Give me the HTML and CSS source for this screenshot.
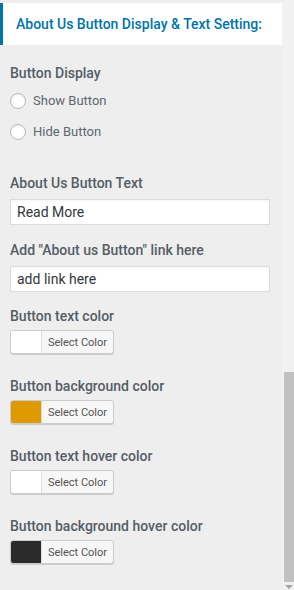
FILE: index.html
```html
<!DOCTYPE html>
<html lang="en">
<head>
    <meta charset="UTF-8">
    <meta name="viewport" content="width=device-width, initial-scale=1.0">
    <title>About Us Button Settings</title>
    <link rel="stylesheet" href="styles.css">
</head>
<body>
    <div class="page">
        <div class="panel">
            <h3 class="section-title">About Us Button Display &amp; Text Setting:</h3>

            <div class="controls">
                <div class="control control-radio">
                    <span class="control-label">Button Display</span>
                    <label class="radio-row"><input type="radio" name="about-btn"> Show Button</label>
                    <label class="radio-row"><input type="radio" name="about-btn"> Hide Button</label>
                </div>

                <div class="control control-text first-text">
                    <span class="control-label">About Us Button Text</span>
                    <input class="text-input" type="text" value="Read More">
                </div>

                <div class="control control-text">
                    <span class="control-label">Add "About us Button" link here</span>
                    <input class="text-input" type="text" value="add link here">
                </div>

                <div class="control control-color">
                    <span class="control-label">Button text color</span>
                    <button class="color-btn"><span class="swatch swatch-white"></span><span class="color-text">Select Color</span></button>
                </div>

                <div class="control control-color">
                    <span class="control-label">Button background color</span>
                    <button class="color-btn"><span class="swatch swatch-gold"></span><span class="color-text">Select Color</span></button>
                </div>

                <div class="control control-color">
                    <span class="control-label">Button text hover color</span>
                    <button class="color-btn"><span class="swatch swatch-white"></span><span class="color-text">Select Color</span></button>
                </div>

                <div class="control control-color">
                    <span class="control-label">Button background hover color</span>
                    <button class="color-btn"><span class="swatch swatch-dark"></span><span class="color-text">Select Color</span></button>
                </div>
            </div>
        </div>

        <div class="scrollbar">
            <div class="scroll-gap"></div>
            <div class="scroll-thumb"></div>
            <div class="scroll-arrow"></div>
        </div>
    </div>
</body>
</html>
```

FILE: styles.css
```css
html, body {
    margin: 0;
    padding: 0;
    background: #eeeeee;
}
body {
    font-family: Roboto, "Noto Sans", sans-serif;
    color: #555d66;
}
.page {
    display: flex;
    height: 590px;
    overflow: hidden;
}
.panel {
    width: 282px;
    flex: none;
}
.section-title {
    margin: 3px 0 0;
    height: 42px;
    box-sizing: border-box;
    background: #fff;
    border-left: 3px solid #0073aa;
    padding-left: 13px;
    display: flex;
    align-items: center;
    font-size: 14px;
    font-weight: 500;
    color: #0073aa;
}
.controls {
    padding: 18px 12px 0 10px;
}
.control {
    display: flex;
    flex-direction: column;
    align-items: flex-start;
}
.control-label {
    font-size: 14px;
    font-weight: 500;
    line-height: 20px;
    color: #555d66;
    margin-bottom: 6px;
}
.control-radio .control-label {
    margin-bottom: 2px;
}
.radio-row {
    display: flex;
    align-items: center;
    height: 31px;
    font-size: 13px;
    color: #60676e;
}
.radio-row input {
    -webkit-appearance: none;
    appearance: none;
    width: 16px;
    height: 16px;
    margin: 0 7px 0 0;
    border: 1px solid #b4b9be;
    border-radius: 50%;
    background: #fff;
    box-shadow: inset 0 1px 2px rgba(0, 0, 0, 0.07);
}
.first-text {
    margin-top: 26px;
}
.control-text {
    margin-bottom: 15px;
}
.text-input {
    width: 260px;
    height: 26px;
    box-sizing: border-box;
    border: 1px solid #dddddd;
    background: #fff;
    padding: 0 6px;
    font-family: inherit;
    font-size: 14px;
    color: #32373c;
    box-shadow: inset 0 1px 2px rgba(0, 0, 0, 0.04);
}
.control-text + .control-color {
    margin-top: -1px;
}
.control-color {
    margin-bottom: 22px;
}
.control-color .control-label {
    margin-bottom: 4px;
}
.color-btn {
    display: flex;
    width: 104px;
    height: 24px;
    padding: 0;
    border: 1px solid #cccccc;
    border-radius: 3px;
    background: #f7f7f7;
    box-shadow: 0 1px 0 #cccccc;
    overflow: hidden;
    font-family: inherit;
    cursor: pointer;
}
.swatch {
    width: 30px;
    height: 100%;
    border-right: 1px solid #dddddd;
}
.swatch-white { background: #ffffff; }
.swatch-gold { background: #dd9900; }
.swatch-dark { background: #2b2b2b; }
.color-text {
    flex: 1;
    align-self: center;
    font-size: 11px;
    color: #555555;
    text-align: center;
}
.scrollbar {
    width: 12px;
    flex: none;
    display: flex;
    flex-direction: column;
    background: #f1f1f1;
}
.scroll-gap {
    height: 372px;
}
.scroll-thumb {
    height: 210px;
    margin-left: 2px;
    background: #c1c1c1;
}
.scroll-arrow {
    width: 0;
    height: 0;
    margin: 3px 0 0 3px;
    border-left: 4px solid transparent;
    border-right: 4px solid transparent;
    border-top: 4px solid #a3a3a3;
}
```
